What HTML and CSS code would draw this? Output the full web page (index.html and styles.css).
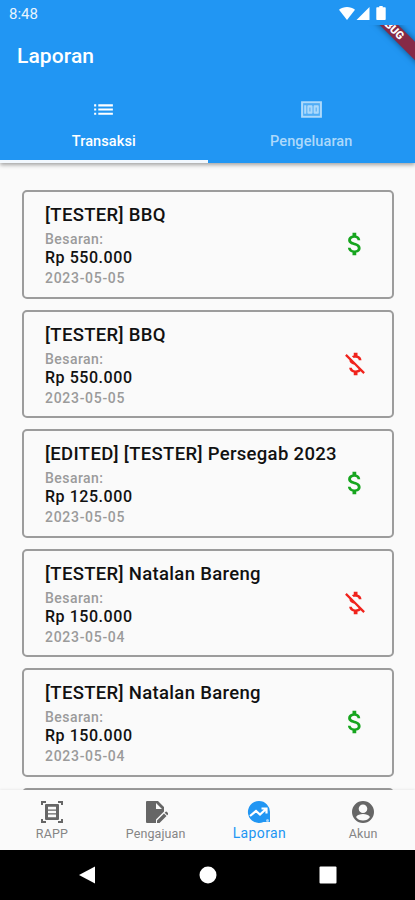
FILE: index.html
```
<!DOCTYPE html>
<html lang="id">
<head>
  <meta charset="UTF-8" />
  <meta name="viewport" content="width=device-width, initial-scale=1.0"/>
  <title>Laporan</title>
  <link rel="stylesheet" href="styles.css">
</head>
<body>

  <!-- icons used more than once -->
  <svg width="0" height="0" class="sprite">
    <symbol id="money" viewBox="0 0 24 24">
      <path d="M11.8 10.9c-2.27-.59-3-1.2-3-2.15 0-1.09 1.01-1.85 2.7-1.85 1.78 0 2.44.85 2.5 2.1h2.21c-.07-1.72-1.12-3.3-3.21-3.81V3h-3v2.16c-1.94.42-3.5 1.68-3.5 3.61 0 2.31 1.91 3.46 4.7 4.13 2.5.6 3 1.48 3 2.41 0 .69-.49 1.79-2.7 1.79-2.06 0-2.87-.92-2.98-2.1h-2.2c.12 2.19 1.76 3.42 3.68 3.83V21h3v-2.15c1.95-.37 3.5-1.5 3.5-3.55 0-2.84-2.43-3.81-4.7-4.4z"/>
    </symbol>
    <symbol id="money-off" viewBox="0 0 24 24">
      <path d="M12.5 6.9c1.78 0 2.44.85 2.5 2.1h2.21c-.07-1.72-1.12-3.3-3.21-3.81V3h-3v2.16c-.53.12-1.03.3-1.48.54l1.47 1.47c.41-.17.91-.27 1.51-.27zM5.33 4.06L4.06 5.33 7.5 8.77c0 2.08 1.56 3.21 3.91 3.91l3.51 3.51c-.34.48-1.05.91-2.42.91-2.06 0-2.87-.92-2.98-2.1h-2.2c.12 2.19 1.76 3.42 3.68 3.83V21h3v-2.15c.96-.18 1.82-.55 2.45-1.12l2.22 2.22 1.27-1.27L5.33 4.06z"/>
    </symbol>
  </svg>

  <div class="header">
    <div class="status">
      <span>8:48</span>
      <svg class="status-icons" viewBox="0 0 48 15">
        <path d="M0 3.700C4.500 0 11.500 0 16 3.700L8 14z"/>
        <path d="M17.500 14L30.500 1v13z"/>
        <path d="M40.300 0h3.400v1.200H46q.7 0 .7.700v11.400q0 .7-.7.700h-8q-.7 0-.7-.7V1.900q0-.7.7-.7h2.300z"/>
      </svg>
    </div>
    <div class="debug"><span>DEBUG</span></div>
    <h1 class="title">Laporan</h1>
    <div class="tabs">
      <div class="tab active">
        <svg viewBox="0 0 24 24"><path d="M3 13h2v-2H3v2zm0 4h2v-2H3v2zm0-8h2V7H3v2zm4 4h14v-2H7v2zm0 4h14v-2H7v2zM7 7v2h14V7H7z"/></svg>
        <span>Transaksi</span>
      </div>
      <div class="tab">
        <svg viewBox="0 0 24 24"><path d="M5 8h2v8H5zM12 8H9c-.55 0-1 .45-1 1v6c0 .55.45 1 1 1h3c.55 0 1-.45 1-1V9c0-.55-.45-1-1-1zm-1 6h-1v-4h1v4zM18 8h-3c-.55 0-1 .45-1 1v6c0 .55.45 1 1 1h3c.55 0 1-.45 1-1V9c0-.55-.45-1-1-1zm-1 6h-1v-4h1v4z"/><path d="M2 4v16h20V4H2zm2 14V6h16v12H4z"/><path opacity=".35" d="M4 6h16v12H4z"/></svg>
        <span>Pengeluaran</span>
      </div>
    </div>
  </div>

  <div class="list">
    <div class="card">
      <div class="info">
        <div class="name">[TESTER] BBQ</div>
        <div class="label">Besaran:</div>
        <div class="amount">Rp 550.000</div>
        <div class="date">2023-05-05</div>
      </div>
      <svg class="paid"><use href="#money"/></svg>
    </div>
    <div class="card">
      <div class="info">
        <div class="name">[TESTER] BBQ</div>
        <div class="label">Besaran:</div>
        <div class="amount">Rp 550.000</div>
        <div class="date">2023-05-05</div>
      </div>
      <svg class="unpaid"><use href="#money-off"/></svg>
    </div>
    <div class="card">
      <div class="info">
        <div class="name">[EDITED] [TESTER] Persegab 2023</div>
        <div class="label">Besaran:</div>
        <div class="amount">Rp 125.000</div>
        <div class="date">2023-05-05</div>
      </div>
      <svg class="paid"><use href="#money"/></svg>
    </div>
    <div class="card">
      <div class="info">
        <div class="name">[TESTER] Natalan Bareng</div>
        <div class="label">Besaran:</div>
        <div class="amount">Rp 150.000</div>
        <div class="date">2023-05-04</div>
      </div>
      <svg class="unpaid"><use href="#money-off"/></svg>
    </div>
    <div class="card">
      <div class="info">
        <div class="name">[TESTER] Natalan Bareng</div>
        <div class="label">Besaran:</div>
        <div class="amount">Rp 150.000</div>
        <div class="date">2023-05-04</div>
      </div>
      <svg class="paid"><use href="#money"/></svg>
    </div>
    <div class="card"></div>
  </div>

  <div class="nav">
    <div class="nav-item">
      <svg viewBox="0 0 24 24"><path d="M1 1h5v2H3v2H1zM18 1h5v4h-2V3h-3zM1 19h2v2h3v2H1zM21 19h2v4h-5v-2h3z"/><path fill-rule="evenodd" d="M6 4h12q1 0 1 1v14q0 1-1 1H6q-1 0-1-1V5q0-1 1-1zm2 2.800v2.700h8V6.800zm0 3.900v2.600h8v-2.600zm0 3.800v2.700h8v-2.700z"/></svg>
      <span>RAPP</span>
    </div>
    <div class="nav-item">
      <svg viewBox="0 0 24 24"><path fill-rule="evenodd" d="M3 1h11l6 6v4.500l-8 8V23H3q-1 0-1-1V2q0-1 1-1zm9 2v6h6z"/><path d="M13 20.500l7-7 2.500 2.500-7 7H13zM20.700 12.800l1-1q.5-.5 1 0l1.500 1.500q.5.500 0 1l-1 1z"/></svg>
      <span>Pengajuan</span>
    </div>
    <div class="nav-item selected">
      <svg viewBox="0 0 24 24"><path d="M12 1a11 11 0 1 0 4.500 21H23v-9.500A11 11 0 0 0 12 1z"/><path class="trend" d="M3 16l6-5 4 3.500L19 9M14.500 8.500h5v5"/><circle class="dot" cx="20.500" cy="20.500" r="1.500"/></svg>
      <span>Laporan</span>
    </div>
    <div class="nav-item">
      <svg viewBox="0 0 24 24"><path fill-rule="evenodd" d="M12 1a11 11 0 1 0 0 22 11 11 0 0 0 0-22zm0 3.500a4.300 4.300 0 1 1 0 8.600 4.300 4.300 0 0 1 0-8.600zm0 16c-3 0-5.500-1.300-7-3.600 1.500-1.800 4-2.800 7-2.800s5.500 1 7 2.800c-1.500 2.300-4 3.600-7 3.600z"/></svg>
      <span>Akun</span>
    </div>
  </div>

  <div class="system">
    <svg viewBox="0 0 18 18"><path d="M0 9L16 .5v17z"/></svg>
    <svg viewBox="0 0 18 18"><circle cx="9" cy="9" r="8.500"/></svg>
    <svg viewBox="0 0 18 18"><rect x=".5" y=".5" width="17" height="17" rx="1"/></svg>
  </div>

</body>
</html>
```
FILE: styles.css
```
* {
  box-sizing: border-box;
}

body {
  margin: 0;
  height: 900px;
  display: flex;
  flex-direction: column;
  overflow: hidden;
  font-family: Roboto, sans-serif;
  background-color: #fafafa;
  color: #111;
}

svg {
  fill: currentColor;
  display: block;
}

.sprite {
  position: absolute;
}

.header {
  position: relative;
  flex: none;
  height: 163px;
  background-color: #2196f3;
  color: #fff;
  box-shadow: 0 2px 4px rgba(0,0,0,0.35);
}

.status {
  height: 25px;
  padding: 6px 28px 0 9px;
  display: flex;
  justify-content: space-between;
  font-size: 15px;
  line-height: 16px;
  color: #e8f4fe;
}

.status-icons {
  width: 48px;
  height: 15px;
  color: #fff;
}

/* ribbon slides under the status bar */
.debug {
  position: absolute;
  top: 25px;
  right: 0;
  width: 60px;
  height: 50px;
  overflow: hidden;
}

.debug span {
  position: absolute;
  left: -16px;
  top: -6px;
  width: 101px;
  height: 13px;
  transform: rotate(45deg);
  background-color: #862a46;
  box-shadow: 0 0 6px rgba(0,0,0,0.5);
  font-size: 11px;
  font-weight: 900;
  line-height: 13px;
  text-align: center;
}

.title {
  margin: 0;
  padding: 18px 0 0 17px;
  font-size: 21px;
  font-weight: 500;
  line-height: 26px;
  letter-spacing: 0.1px;
}

.tabs {
  display: flex;
  height: 76px;
  margin-top: 18px;
}

.tab {
  flex: 1;
  display: flex;
  flex-direction: column;
  align-items: center;
  padding-top: 10px;
  font-size: 14.5px;
  font-weight: 500;
  line-height: 18px;
  letter-spacing: 0.1px;
  color: #add9fb;
}

.tab svg {
  width: 25px;
  height: 25px;
  margin-bottom: 11px;
}

.tab.active {
  color: #fff;
  border-bottom: 3px solid #f2f8fe;
}

.list {
  flex: 1;
  min-height: 0;
  overflow: hidden;
  padding: 27px 21px 0 21.5px;
}

.card {
  display: flex;
  justify-content: space-between;
  align-items: center;
  height: 108.5px;
  margin-bottom: 11px;
  padding: 0 22px 0 21.5px;
  border: 2px solid #9c9c9c;
  border-radius: 5px;
}

.card svg {
  width: 30px;
  height: 30px;
}

.info {
  padding-top: 4px;
}

.name {
  font-size: 18.5px;
  font-weight: 500;
  line-height: 25px;
  letter-spacing: 0.32px;
}

.label,
.date {
  font-size: 14px;
  font-weight: 500;
  color: #9b9b9b;
}

.label {
  padding-top: 2px;
  line-height: 19px;
  letter-spacing: 0.45px;
}

.date {
  line-height: 22px;
  letter-spacing: 0.7px;
}

.amount {
  font-size: 16px;
  font-weight: 500;
  line-height: 18px;
  letter-spacing: 0.55px;
}

.paid {
  color: #16a51e;
}

.unpaid {
  color: #f0231c;
}

.nav {
  flex: none;
  height: 60px;
  display: flex;
  background-color: #fafafa;
  box-shadow: 0 -1px 2px rgba(0,0,0,0.06);
  z-index: 1;
}

.nav-item {
  flex: 1;
  display: flex;
  flex-direction: column;
  align-items: center;
  padding-top: 10px;
  font-size: 12.5px;
  line-height: 20px;
  letter-spacing: 0.1px;
  color: #858585;
}

.nav-item svg {
  width: 24px;
  height: 24px;
  color: #666;
}

.nav-item.selected,
.nav-item.selected svg {
  color: #2196f3;
}

.nav-item.selected {
  font-size: 14px;
  line-height: 19px;
  letter-spacing: 0.35px;
}

.trend {
  fill: none;
  stroke: #fff;
  stroke-width: 2.2;
}

.dot {
  fill: #a5d3fa;
}

.system {
  flex: none;
  height: 50px;
  display: flex;
  justify-content: center;
  align-items: center;
  gap: 102px;
  background-color: #000;
  color: #fff;
}

.system svg {
  width: 18px;
  height: 18px;
}
```
